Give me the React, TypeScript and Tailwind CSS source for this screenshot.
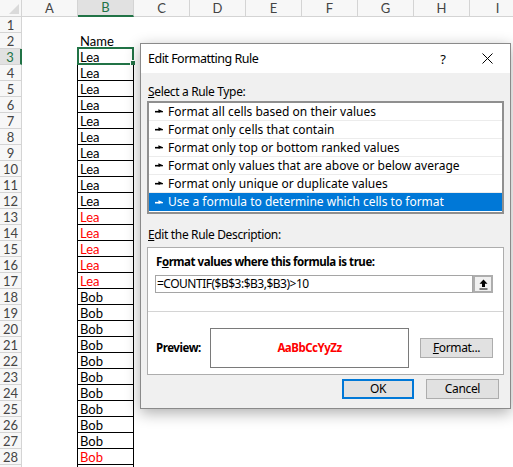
import React from "react";

const COLS = ["A", "B", "C", "D", "E", "F", "G", "H", "I"];
const ROWS = Array.from({ length: 29 }, (_, i) => i + 1);

function cellValue(r: number): { t: string; red?: boolean } | null {
  if (r === 2) return { t: "Name" };
  if (r >= 3 && r <= 12) return { t: "Lea" };
  if (r >= 13 && r <= 17) return { t: "Lea", red: true };
  if (r >= 18 && r <= 27) return { t: "Bob" };
  if (r === 28) return { t: "Bob", red: true };
  return null;
}

function RuleGlyph() {
  return (
    <svg width="8" height="7" viewBox="0 0 8 7" className="shrink-0">
      <path d="M0 3.7H5" stroke="currentColor" strokeWidth="1.6" />
      <path d="M3.4 1.2L8 3.3L8 4.2L3.4 4.5Z" fill="currentColor" />
    </svg>
  );
}

function Sheet() {
  return (
    <div className="flex flex-col font-['Lato','Liberation_Sans',sans-serif] text-[13px] text-black">
      <div className="flex h-[17px] shrink-0">
        <div className="w-[22px] shrink-0 h-full border-r border-b border-[#d4d4d4] bg-[#f7f7f7] flex items-end justify-end pr-[2px] pb-[2px]">
          <svg width="10" height="10" viewBox="0 0 10 10">
            <polygon points="10,0 10,10 0,10" fill="#dadada" />
          </svg>
        </div>
        {COLS.map((c) =>
          c === "B" ? (
            <div
              key={c}
              className="w-[56px] shrink-0 h-full border-r border-[#d4d4d4] border-b-2 border-b-[#217346] bg-[#e1e1e1] text-[#217346] flex items-center justify-center leading-[15px]"
            >
              {c}
            </div>
          ) : (
            <div
              key={c}
              className="w-[56px] shrink-0 h-full border-r border-b border-[#d4d4d4] bg-[#f7f7f7] text-[#444] flex items-center justify-center leading-[15px]"
            >
              {c}
            </div>
          )
        )}
      </div>
      {ROWS.map((r) => {
        const v = cellValue(r);
        const inRange = r >= 3;
        return (
          <div key={r} className="flex h-[16px] shrink-0">
            {r === 3 ? (
              <div className="w-[22px] shrink-0 h-full border-b border-[#d4d4d4] border-r-2 border-r-[#217346] bg-[#e1e1e1] text-[#217346] flex items-center justify-center leading-[15px] pt-[1px]">
                {r}
              </div>
            ) : r === 29 ? (
              <div className="w-[22px] shrink-0 h-full border-r border-b border-[#d4d4d4] bg-[#f7f7f7]" />
            ) : (
              <div className="w-[22px] shrink-0 h-full border-r border-b border-[#d4d4d4] bg-[#f7f7f7] text-[#444] flex items-center justify-center leading-[15px] pt-[1px]">
                {r}
              </div>
            )}
            <div
              className={
                inRange
                  ? "w-[56px] shrink-0 h-full border-r border-black"
                  : "w-[56px] shrink-0 h-full"
              }
            />
            <div
              className={
                inRange
                  ? "relative w-[56px] shrink-0 h-full border-r border-b border-black pl-[2px] pt-[1px] leading-[15px] whitespace-nowrap"
                  : r === 2
                  ? "relative w-[56px] shrink-0 h-full border-b border-black pl-[2px] pt-[1px] leading-[15px] whitespace-nowrap"
                  : "relative w-[56px] shrink-0 h-full pl-[2px] leading-[15px]"
              }
            >
              {v ? (
                <span className={v.red ? "text-[#ff0000]" : "text-black"}>{v.t}</span>
              ) : null}
              {r === 3 ? (
                <>
                  <div className="absolute left-[-1px] top-[-2px] w-[57px] h-[18px] border-2 border-[#217346]" />
                  <div className="absolute left-[52px] top-[11px] w-[6px] h-[6px] bg-[#217346] border border-white" />
                </>
              ) : null}
            </div>
            {COLS.slice(2).map((c) => (
              <div key={c} className="w-[56px] shrink-0 h-full" />
            ))}
          </div>
        );
      })}
    </div>
  );
}

const RULES = [
  "Format all cells based on their values",
  "Format only cells that contain",
  "Format only top or bottom ranked values",
  "Format only values that are above or below average",
  "Format only unique or duplicate values",
  "Use a formula to determine which cells to format",
];

function Dialog() {
  return (
    <div className="absolute left-[140px] top-[43px] w-[371px] h-[366px] border border-[#8a8a8a] bg-[#f0f0f0] shadow-[0_4px_14px_rgba(0,0,0,0.32)] flex flex-col font-['Noto_Sans',sans-serif] text-[12px] text-black tracking-[-0.35px]">
      <div className="h-[29px] bg-white flex items-center pl-[7px] shrink-0">
        <span className="text-[12.5px] leading-[16px] pt-[1px] tracking-[-0.5px]">Edit Formatting Rule</span>
        <span className="ml-auto w-[44px] text-center text-[13px] leading-[16px] pl-[2px]">?</span>
        <span className="w-[46px] flex items-center justify-center">
          <svg width="11" height="11" viewBox="0 0 11 11">
            <path d="M0.5 0.5L10.5 10.5M10.5 0.5L0.5 10.5" stroke="#000" strokeWidth="1" />
          </svg>
        </span>
      </div>
      <div className="flex flex-col px-[6px]">
        <div className="mt-[11px] h-[16px] leading-[16px] pl-[1px]">
          <u>S</u>elect a Rule Type:
        </div>
        <div className="mt-[1px] h-[113px] border-2 border-[#8f8f8f] bg-white flex flex-col tracking-normal">
          {RULES.map((t, i) =>
            i === RULES.length - 1 ? (
              <div
                key={t}
                className="h-[18px] shrink-0 bg-[#0078d7] text-white flex items-center gap-[5px] pl-[6px] leading-[16px] whitespace-nowrap"
              >
                <RuleGlyph />
                <span>{t}</span>
              </div>
            ) : (
              <div
                key={t}
                className="h-[18px] shrink-0 border-b border-[#ececec] flex items-center gap-[5px] pl-[6px] leading-[16px] whitespace-nowrap"
              >
                <RuleGlyph />
                <span>{t}</span>
              </div>
            )
          )}
        </div>
        <div className="mt-[13px] h-[16px] leading-[16px] pl-[1px]">
          <u>E</u>dit the Rule Description:
        </div>
        <div className="mt-[4px] h-[128px] border border-[#adadad] bg-white flex flex-col px-[7px] pt-[6px]">
          <div className="h-[16px] leading-[16px] font-bold text-[11.5px] tracking-[-0.45px] pl-[1px] whitespace-nowrap">
            F<u>o</u>rmat values where this formula is true:
          </div>
          <div className="mt-[5px] flex h-[18px]">
            <div className="w-[318px] h-full border border-[#a5a5a5] pl-[1px] leading-[16px] whitespace-nowrap tracking-[-0.5px]">
              =COUNTIF($B$3:$B3,$B3)&gt;10
            </div>
            <div className="w-[20px] h-full border-2 border-[#adadad] bg-[#f0f0f0] flex items-center justify-center">
              <svg width="9" height="11" viewBox="0 0 9 11">
                <path d="M4.5 0.5L8.5 4.8H6V8H3V4.8H0.5Z" fill="#000" />
                <path d="M0.5 10H8.5" stroke="#000" strokeWidth="1" />
              </svg>
            </div>
          </div>
          <div className="mt-[18px] h-px bg-[#d4d4d4] -mx-[7px]" />
          <div className="mt-[16px] flex items-center">
            <div className="w-[55px] shrink-0 font-bold text-[11.5px] tracking-[-0.45px] pl-[1px] leading-[16px]">Preview:</div>
            <div className="w-[199px] h-[40px] shrink-0 border border-[#7a7a7a] flex items-center justify-center font-bold text-[11.5px] tracking-[-0.5px] text-[#ff0000] leading-[16px]">
              AaBbCcYyZz
            </div>
            <div className="ml-[11px] w-[73px] h-[20px] shrink-0 border border-[#adadad] bg-[#e1e1e1] flex items-center justify-center leading-[16px]">
              <span>
                <u>F</u>ormat...
              </span>
            </div>
          </div>
        </div>
        <div className="mt-[4px] flex justify-end gap-[12px] pr-[5px]">
          <div className="w-[72px] h-[20px] border-2 border-[#0078d7] bg-[#e1e1e1] flex items-center justify-center leading-[16px]">
            OK
          </div>
          <div className="w-[73px] h-[20px] border border-[#adadad] bg-[#e1e1e1] flex items-center justify-center leading-[16px]">
            Cancel
          </div>
        </div>
      </div>
    </div>
  );
}

export default function App() {
  return (
    <div className="relative w-[513px] h-[467px] overflow-hidden bg-white">
      <Sheet />
      <Dialog />
    </div>
  );
}
